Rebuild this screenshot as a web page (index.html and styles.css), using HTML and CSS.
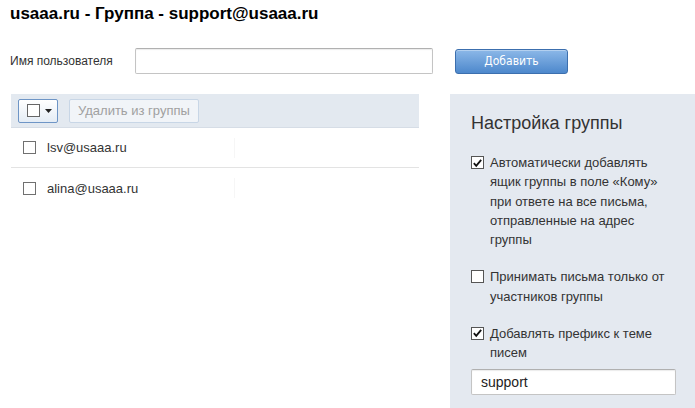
FILE: index.html
```html
<!DOCTYPE html>
<html lang="ru">
<head>
<meta charset="utf-8">
<title>Группа</title>
<link rel="stylesheet" href="styles.css">
</head>
<body>
<h1 class="title">usaaa.ru - Группа - support@usaaa.ru</h1>
<div class="add-row">
  <label class="add-label">Имя пользователя</label>
  <div class="text-input add-input"></div>
  <button class="btn-primary">Добавить</button>
</div>
<div class="main">
  <div class="members">
    <div class="toolbar">
      <div class="select-btn">
        <span class="cb"></span>
        <svg class="caret" width="7" height="4" viewBox="0 0 7 4"><path d="M0 0H7L3.5 4Z" fill="#222"/></svg>
      </div>
      <div class="btn-disabled">Удалить из группы</div>
    </div>
    <div class="member">
      <span class="cb"></span>
      <span class="member-name">lsv@usaaa.ru</span>
      <span class="member-col"></span>
    </div>
    <div class="member">
      <span class="cb"></span>
      <span class="member-name">alina@usaaa.ru</span>
      <span class="member-col"></span>
    </div>
  </div>
  <div class="settings">
    <h2 class="settings-title">Настройка группы</h2>
    <div class="option">
      <span class="cb checked"><svg width="12" height="12" viewBox="0 0 12 12"><path d="M2 6.2L4.6 9L10 2.5" fill="none" stroke="#111" stroke-width="2"/></svg></span>
      <span class="option-text">Автоматически добавлять ящик группы в поле «Кому» при ответе на все письма, отправленные на адрес группы</span>
    </div>
    <div class="option">
      <span class="cb"></span>
      <span class="option-text">Принимать письма только от участников группы</span>
    </div>
    <div class="option">
      <span class="cb checked"><svg width="12" height="12" viewBox="0 0 12 12"><path d="M2 6.2L4.6 9L10 2.5" fill="none" stroke="#111" stroke-width="2"/></svg></span>
      <span class="option-text">Добавлять префикс к теме писем</span>
    </div>
    <div class="text-input prefix-input">support</div>
  </div>
</div>
</body>
</html>
```

FILE: styles.css
```css
* { box-sizing: border-box; }
html, body { margin: 0; padding: 0; background: #fff; }
body {
  font-family: "Liberation Sans", Arial, sans-serif;
  color: #333;
  width: 695px;
  height: 408px;
  overflow: hidden;
}
.title {
  margin: 5px 0 0 10px;
  font-size: 17px;
  line-height: 18px;
  font-weight: bold;
  color: #000;
}
.add-row {
  display: flex;
  align-items: center;
  margin-top: 25px;
  padding-left: 10px;
  height: 26px;
}
.add-label {
  font-size: 12px;
  color: #333;
  width: 125px;
}
.text-input {
  background: #fff;
  border: 1px solid #c4c4c4;
  border-top-color: #b0b0b0;
  box-shadow: inset 0 1px 1px rgba(0,0,0,0.08);
  border-radius: 2px;
}
.add-input {
  width: 298px;
  height: 26px;
}
.btn-primary {
  margin-left: 22px;
  width: 113px;
  height: 25px;
  border: 1px solid #3c6fae;
  border-radius: 3px;
  background: linear-gradient(#8cb8e8, #4d88cc);
  color: #fff;
  font-family: "DejaVu Sans Condensed", "Liberation Sans", sans-serif;
  font-size: 12px;
  padding: 0;
  box-shadow: inset 0 1px 0 rgba(255,255,255,0.35);
}
.main {
  display: flex;
  margin-top: 20px;
  padding-left: 11px;
}
.members {
  width: 408px;
}
.toolbar {
  display: flex;
  align-items: center;
  gap: 11px;
  height: 34px;
  padding-left: 7px;
  background: #e3e9f0;
  border-bottom: 1px solid #d6dde6;
}
.select-btn {
  display: flex;
  align-items: center;
  gap: 5px;
  width: 40px;
  height: 24px;
  padding-left: 8px;
  border: 1px solid #6e95c6;
  border-radius: 2px;
  background: linear-gradient(#ffffff, #e4ecf5);
}
.cb {
  display: inline-flex;
  align-items: center;
  justify-content: center;
  width: 13px;
  height: 13px;
  flex: none;
  border: 1px solid #666;
  background: #fff;
}
.caret { display: block; }
.btn-disabled {
  display: flex;
  align-items: center;
  height: 24px;
  padding: 0 8px;
  border: 1px solid #c8d6e6;
  border-radius: 2px;
  background: #f1f4f8;
  color: #a0a0a0;
  font-size: 13px;
}
.member {
  display: flex;
  align-items: center;
  height: 40px;
  padding-left: 12px;
  border-bottom: 1px solid #e3e3e3;
  font-size: 13px;
  color: #333;
}
.member:last-child { border-bottom: none; }
.member .cb { border-color: #707070; }
.member-name {
  margin-left: 11px;
  width: 187px;
}
.member-col {
  width: 1px;
  height: 20px;
  background: #f6f6f6;
}
.settings {
  margin-left: 31px;
  flex: 1;
  min-height: 320px;
  background: #e4e9f0;
  padding: 17px 0 0 21px;
}
.settings-title {
  margin: 0 0 18px 0;
  font-size: 18px;
  font-weight: normal;
  line-height: 24px;
  color: #333;
}
.option {
  display: flex;
  align-items: flex-start;
  gap: 6px;
  font-size: 13px;
  line-height: 19.25px;
  color: #333;
  margin-bottom: 18px;
}
.option-text { width: 186px; }
.option .cb {
  margin-top: 3px;
  border-color: #555;
}
.option:nth-of-type(3) { margin-bottom: 7px; }
.prefix-input {
  width: 205px;
  height: 26px;
  padding: 2px 9px;
  font-size: 14px;
  line-height: 20px;
  color: #222;
}
```
